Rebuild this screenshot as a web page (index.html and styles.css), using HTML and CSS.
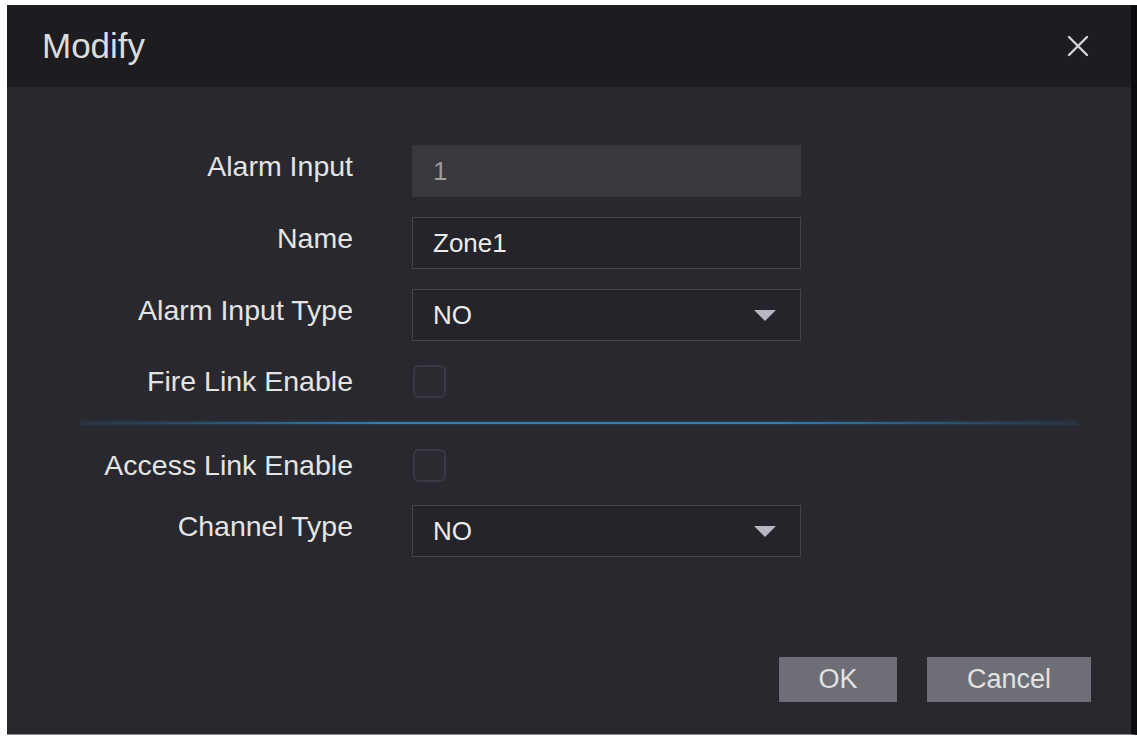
FILE: index.html
```html
<!DOCTYPE html>
<html lang="en">
<head>
  <meta charset="UTF-8" />
  <meta name="viewport" content="width=device-width, initial-scale=1.0"/>
  <title>Modify</title>
  <link rel="stylesheet" href="styles.css">
</head>
<body>
  <div class="dialog">
    <header class="dialog-head">
      <h1>Modify</h1>
      <button class="close" title="Close">
        <svg width="22" height="22" viewBox="0 0 22 22">
          <path d="M2 2 L20 20 M20 2 L2 20" stroke="#d4d4d8" stroke-width="2.4" stroke-linecap="round"/>
        </svg>
      </button>
    </header>

    <div class="dialog-body">
      <div class="row">
        <label>Alarm Input</label>
        <input class="field disabled" type="text" value="1" disabled>
      </div>
      <div class="row">
        <label>Name</label>
        <input class="field" type="text" value="Zone1">
      </div>
      <div class="row">
        <label>Alarm Input Type</label>
        <div class="field select">NO<span class="arrow"></span></div>
      </div>
      <div class="row check-row">
        <label>Fire Link Enable</label>
        <span class="checkbox"></span>
      </div>

      <div class="divider"></div>

      <div class="row check-row">
        <label>Access Link Enable</label>
        <span class="checkbox"></span>
      </div>
      <div class="row">
        <label>Channel Type</label>
        <div class="field select">NO<span class="arrow"></span></div>
      </div>

      <div class="dialog-foot">
        <button class="btn btn-ok">OK</button>
        <button class="btn btn-cancel">Cancel</button>
      </div>
    </div>
  </div>
</body>
</html>
```

FILE: styles.css
```css
body {
  margin: 0;
  background: #fff;
  font-family: "Liberation Sans", Arial, sans-serif;
}
.dialog {
  margin: 5px 0 0 7px;
  width: 1124px;
  height: 729px;
  border-right: 6px solid #0c0c0e;
  border-bottom: 1px solid #8a8a8a;
  background: #28282e;
  display: flex;
  flex-direction: column;
}
.dialog-head {
  height: 82px;
  background: #1d1d21;
  display: flex;
  align-items: center;
  justify-content: space-between;
  padding: 0 42px 0 35px;
}
.dialog-head h1 {
  margin: 0;
  font-size: 35px;
  font-weight: normal;
  color: #dcdcdc;
}
.close {
  background: none;
  border: 0;
  padding: 0;
  width: 22px;
  height: 22px;
  cursor: pointer;
}
.dialog-body {
  flex: 1;
  display: flex;
  flex-direction: column;
  padding-top: 58px;
}
.row {
  display: grid;
  grid-template-columns: 346px 389px;
  column-gap: 59px;
  align-items: center;
  height: 52px;
  margin-bottom: 20px;
}
.row label {
  text-align: right;
  font-size: 28.5px;
  color: #e4e4e4;
  padding-bottom: 10px;
}
.check-row {
  height: 40px;
}
.check-row label {
  padding-bottom: 0;
}
.field {
  box-sizing: border-box;
  height: 52px;
  width: 389px;
  margin: 0;
  padding: 0 20px;
  border: 1px solid #45454d;
  background: #24242a;
  color: #ececec;
  font-family: inherit;
  font-size: 26px;
  outline: none;
}
.field.disabled {
  background: #38383d;
  border-color: #38383d;
  color: #9c9c9c;
}
.select {
  display: flex;
  align-items: center;
  justify-content: space-between;
}
.arrow {
  width: 0;
  height: 0;
  border-left: 11px solid transparent;
  border-right: 11px solid transparent;
  border-top: 11px solid #b8b8c2;
  margin-right: 4px;
}
.checkbox {
  width: 29px;
  height: 29px;
  border: 2px solid #3a3a45;
  border-radius: 6px;
  background: #2a2a31;
  margin-left: 1px;
}
.divider {
  height: 2px;
  margin: 1px 53px 21px 73px;
  background: linear-gradient(to right, rgba(40, 90, 130, 0.2), #3b7aa6 30%, #3b7aa6 70%, rgba(40, 90, 130, 0.2));
  box-shadow: 0 0 3px rgba(59, 122, 166, 0.5);
}
.dialog-foot {
  margin-top: auto;
  display: flex;
  justify-content: flex-end;
  gap: 30px;
  padding: 0 40px 32px 0;
}
.btn {
  height: 45px;
  border: 0;
  background: #6e6e76;
  color: #e2e2e2;
  font-family: inherit;
  font-size: 27px;
  cursor: pointer;
}
.btn-ok {
  width: 118px;
}
.btn-cancel {
  width: 164px;
}
```
